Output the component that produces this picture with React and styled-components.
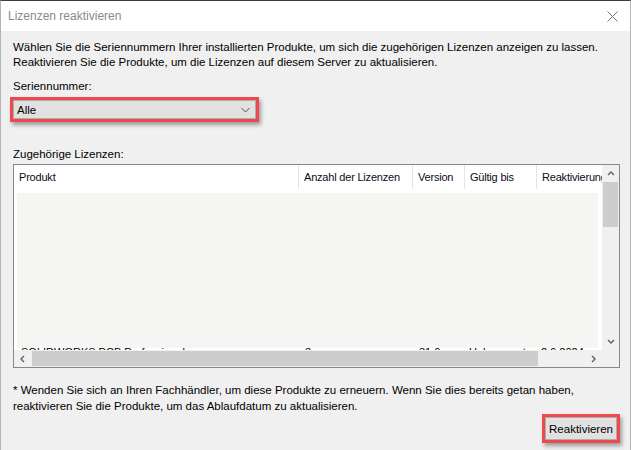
import React from "react";
import styled, { createGlobalStyle } from "styled-components";

const GlobalStyle = createGlobalStyle`
  html, body {
    margin: 0;
    padding: 0;
    background: #f0f0f0;
  }
  * {
    box-sizing: border-box;
  }
`;

const Window = styled.div`
  width: 631px;
  height: 450px;
  display: flex;
  flex-direction: column;
  background: #f0f0f0;
  border-top: 1px solid #3f3f3f;
  border-left: 1px solid #b4b4b4;
  border-right: 1px solid #b4b4b4;
  font-family: "Liberation Sans", Arial, sans-serif;
  font-size: 11.5px;
  color: #000;
  overflow: hidden;
`;

const TitleBar = styled.div`
  height: 30px;
  flex: none;
  display: flex;
  align-items: center;
  justify-content: space-between;
  padding: 0 12px 0 7px;
  background: #fff;
`;

const Title = styled.span`
  color: #8a8a8a;
  font-size: 12px;
`;

const Body = styled.div`
  flex: 1;
  display: flex;
  flex-direction: column;
  padding: 9px 10px 0 12px;
`;

const Text = styled.p`
  margin: ${(p) => p.$margin || "0"};
  line-height: ${(p) => p.$lh || "15px"};
  white-space: nowrap;
`;

const Highlight = styled.div`
  align-self: ${(p) => p.$align || "flex-start"};
  border: 3px solid #ef4950;
  box-shadow: 2px 3px 4px rgba(0, 0, 0, 0.35);
  margin: ${(p) => p.$margin || "0"};
`;

const Combo = styled.div`
  width: 243px;
  height: 19px;
  display: flex;
  align-items: center;
  justify-content: space-between;
  padding: 0 5px 0 3px;
  background: #e1e1e1;
  border: 1px solid #adadad;
`;

const ListBox = styled.div`
  width: 607px;
  height: 204px;
  margin-top: 2px;
  border: 1px solid #828790;
  background: #fff;
  display: grid;
  grid-template-columns: 1fr 17px;
  grid-template-rows: 1fr 17px;
`;

const ListContent = styled.div`
  overflow: hidden;
  display: flex;
  flex-direction: column;
`;

const cols = "284px 114px 52px 72px 100px";

const Header = styled.div`
  height: 24px;
  flex: none;
  display: grid;
  grid-template-columns: ${cols};
  background: #fff;
  font-size: 11px;
  letter-spacing: -0.2px;
  color: #0b0b1a;
`;

const HeaderCell = styled.div`
  display: flex;
  align-items: center;
  padding-left: 5px;
  white-space: nowrap;
  overflow: hidden;
  border-left: ${(p) => (p.$first ? "none" : "1px solid #e5e5e5")};
`;

const Blank = styled.div`
  flex: none;
  height: 155px;
  margin: 4px 4px 0 3px;
  background: #f5f5f3;
`;

const Row = styled.div`
  display: grid;
  grid-template-columns: ${cols};
  font-size: 11px;
  line-height: 13px;
  margin-top: -2px;
  white-space: nowrap;
`;

const Cell = styled.div`
  padding-left: ${(p) => p.$pad || "7px"};
  overflow: hidden;
`;

const VScroll = styled.div`
  background: #f0f0f0;
  display: flex;
  flex-direction: column;
  align-items: center;
`;

const HScroll = styled.div`
  background: #f0f0f0;
  display: flex;
  align-items: center;
`;

const ArrowBox = styled.div`
  width: 17px;
  height: 17px;
  flex: none;
  display: flex;
  align-items: center;
  justify-content: center;
`;

const VThumb = styled.div`
  width: 15px;
  height: 45px;
  background: #cdcdcd;
`;

const VTrack = styled.div`
  flex: 1;
  width: 100%;
  display: flex;
  justify-content: center;
`;

const HTrack = styled.div`
  flex: 1;
  height: 100%;
  display: flex;
  align-items: center;
`;

const HThumb = styled.div`
  width: 506px;
  height: 15px;
  margin-left: 1px;
  background: #cdcdcd;
`;

const Corner = styled.div`
  background: #f0f0f0;
`;

const Footer = styled.div`
  display: flex;
  flex-direction: column;
  margin-top: 14px;
`;

const Button = styled.div`
  width: 72px;
  height: 23px;
  display: flex;
  align-items: center;
  justify-content: center;
  background: #e1e1e1;
  border: 1px solid #adadad;
`;

const Arrow = ({ dir, size = 7 }) => {
  const pts = {
    up: "1,5 4,2 7,5",
    down: "1,2 4,5 7,2",
    left: "5,1 2,4 5,7",
    right: "2,1 5,4 2,7",
  }[dir];
  return (
    <svg width={size + 1} height={size + 1} viewBox="0 0 8 8">
      <polyline points={pts} fill="none" stroke="#606060" strokeWidth="1.4" />
    </svg>
  );
};

const CloseIcon = () => (
  <svg width="11" height="11" viewBox="0 0 11 11">
    <path d="M0.5 0.5 L10.5 10.5 M10.5 0.5 L0.5 10.5" stroke="#707070" strokeWidth="1" />
  </svg>
);

const Chevron = () => (
  <svg width="9" height="6" viewBox="0 0 9 6">
    <polyline points="0.5,1 4.5,5 8.5,1" fill="none" stroke="#505050" strokeWidth="1" />
  </svg>
);

const columns = ["Produkt", "Anzahl der Lizenzen", "Version", "Gültig bis", "Reaktivierung"];

export default function App() {
  return (
    <>
      <GlobalStyle />
      <Window>
        <TitleBar>
          <Title>Lizenzen reaktivieren</Title>
          <CloseIcon />
        </TitleBar>
        <Body>
          <Text>
            Wählen Sie die Seriennummern Ihrer installierten Produkte, um sich die zugehörigen Lizenzen anzeigen zu lassen.
            <br />
            Reaktivieren Sie die Produkte, um die Lizenzen auf diesem Server zu aktualisieren.
          </Text>
          <Text $margin="9px 0 3px">Seriennummer:</Text>
          <Highlight $margin="0 0 0 -3px">
            <Combo>
              <span>Alle</span>
              <Chevron />
            </Combo>
          </Highlight>
          <Text $margin="25px 0 0">Zugehörige Lizenzen:</Text>
          <ListBox>
            <ListContent>
              <Header>
                {columns.map((c, i) => (
                  <HeaderCell key={c} $first={i === 0}>
                    {c}
                  </HeaderCell>
                ))}
              </Header>
              <Blank />
              <Row>
                <Cell>SOLIDWORKS PCB Professional</Cell>
                <Cell>3</Cell>
                <Cell>31.0</Cell>
                <Cell $pad="5px">Unbegrenzt</Cell>
                <Cell $pad="5px">2.9.2024</Cell>
              </Row>
            </ListContent>
            <VScroll>
              <ArrowBox>
                <Arrow dir="up" />
              </ArrowBox>
              <VTrack>
                <VThumb />
              </VTrack>
              <ArrowBox>
                <Arrow dir="down" />
              </ArrowBox>
            </VScroll>
            <HScroll>
              <ArrowBox>
                <Arrow dir="left" />
              </ArrowBox>
              <HTrack>
                <HThumb />
              </HTrack>
              <ArrowBox>
                <Arrow dir="right" />
              </ArrowBox>
            </HScroll>
            <Corner />
          </ListBox>
          <Footer>
            <Text $lh="16px">
              * Wenden Sie sich an Ihren Fachhändler, um diese Produkte zu erneuern. Wenn Sie dies bereits getan haben,
              <br />
              reaktivieren Sie die Produkte, um das Ablaufdatum zu aktualisieren.
            </Text>
            <Highlight $align="flex-end" $margin="0">
              <Button>Reaktivieren</Button>
            </Highlight>
          </Footer>
        </Body>
      </Window>
    </>
  );
}
